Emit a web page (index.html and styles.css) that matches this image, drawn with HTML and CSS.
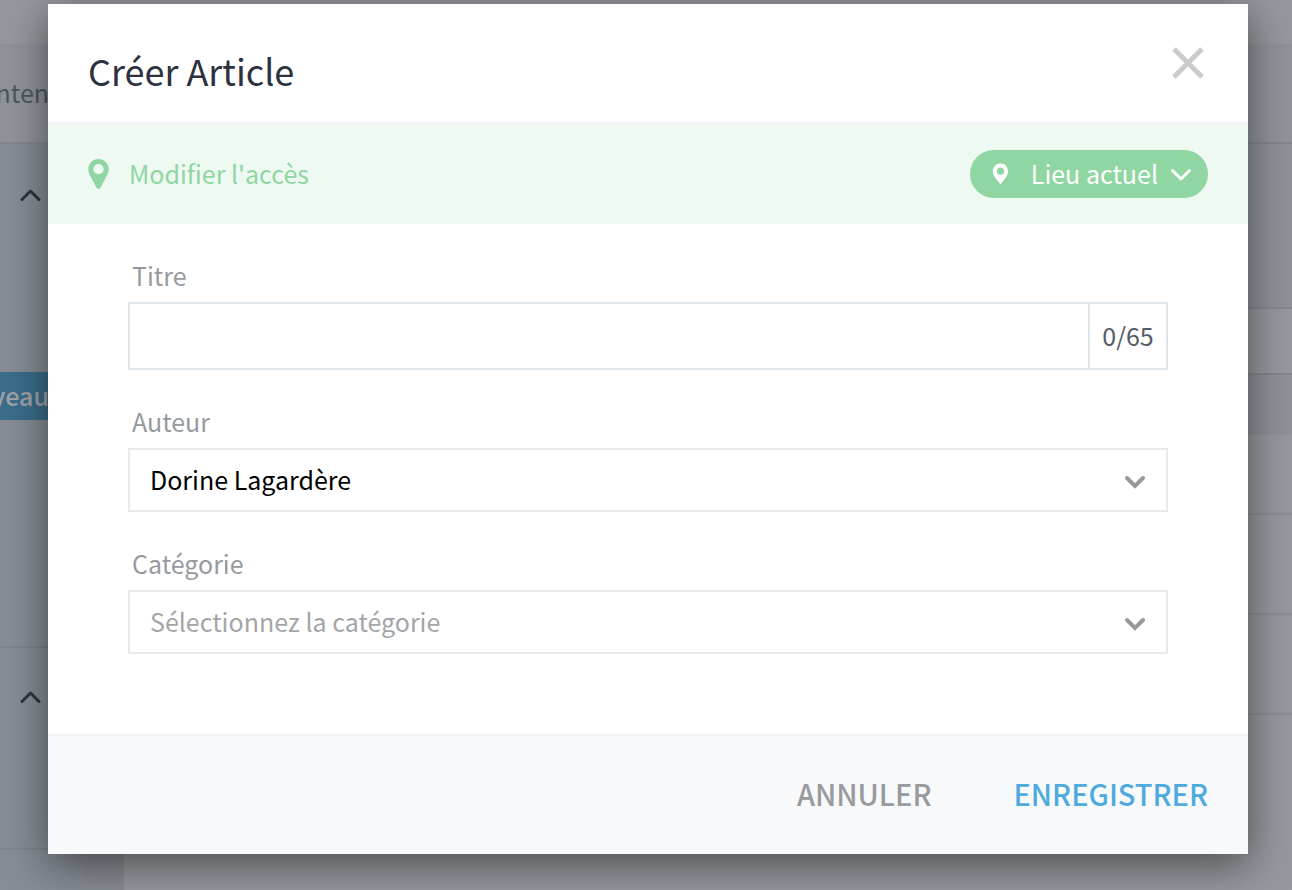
FILE: index.html
```html
<!DOCTYPE html>
<html lang="fr">
<head>
<meta charset="utf-8">
<title>Créer Article</title>
<link rel="stylesheet" href="styles.css">
</head>
<body>
<div class="app">
  <div class="topbar"></div>
  <nav class="tabs"><span class="tab">nten</span></nav>
  <div class="workspace">
    <aside class="sidebar">
      <section class="group group-main">
        <svg class="caret" viewBox="0 0 22 14"><path d="M2 11.500 10.500 3l8.500 8.500"/></svg>
        <span class="current">veau</span>
      </section>
      <section class="group group-extra">
        <svg class="caret" viewBox="0 0 22 14"><path d="M2 11.500 10.500 3l8.500 8.500"/></svg>
      </section>
    </aside>
    <div class="gutter"></div>
    <main class="content">
      <div class="heading"></div>
      <div class="filter"></div>
      <div class="columns"></div>
      <div class="row row-first"></div>
      <div class="row"></div>
      <div class="row"></div>
      <div class="rest"></div>
    </main>
  </div>
</div>

<div class="overlay">
  <form class="dialog" role="dialog" aria-labelledby="dialog-title">
    <header class="dialog-header">
      <h1 class="dialog-title" id="dialog-title">Créer Article</h1>
      <button class="close" type="button" aria-label="Fermer">
        <svg viewBox="0 0 32 32"><path d="M2 2l28 28M30 2 2 30"/></svg>
      </button>
    </header>
    <div class="access">
      <svg class="pin" viewBox="0 0 22 32"><path fill-rule="evenodd" d="M10.500 1C4.800 1 .300 5.500.300 11.200c0 2.500.700 4.200 1.800 6.400l6.300 12c.900 1.800 3.300 1.800 4.200 0l6.300-12c1.100-2.200 1.800-3.900 1.800-6.400C20.700 5.500 16.200 1 10.500 1Zm0 5.100a5.100 5.100 0 1 1 0 10.200 5.100 5.100 0 0 1 0-10.200Z"/></svg>
      <span class="access-label">Modifier l'accès</span>
      <button class="place" type="button">
        <svg class="place-pin" viewBox="0 0 16 22"><path fill-rule="evenodd" d="M8.500.500C4.200.500.800 3.900.800 8.200c0 5.300 5.200 9.300 7.700 13.300 2.500-4 7.500-8 7.500-13.300C16 3.900 12.800.500 8.500.500Zm0 4.100a3.600 3.600 0 1 1 0 7.200 3.600 3.600 0 0 1 0-7.200Z"/></svg>
        <span class="place-label">Lieu actuel</span>
        <svg class="place-caret" viewBox="0 0 20 14"><path d="M1.500 3.500 10 12l8.500-8.500"/></svg>
      </button>
    </div>
    <div class="fields">
      <div class="field">
        <label for="title">Titre</label>
        <div class="box box-title">
          <input id="title" type="text" maxlength="65">
          <span class="counter">0/65</span>
        </div>
      </div>
      <div class="field">
        <label for="author">Auteur</label>
        <div class="box box-select">
          <select id="author"><option>Dorine Lagardère</option></select>
          <svg class="arrow" viewBox="0 0 20 14"><path d="M2 3 10 11l8-8"/></svg>
        </div>
      </div>
      <div class="field">
        <label for="category">Catégorie</label>
        <div class="box box-select">
          <select id="category" class="empty"><option>Sélectionnez la catégorie</option></select>
          <svg class="arrow" viewBox="0 0 20 14"><path d="M2 3 10 11l8-8"/></svg>
        </div>
      </div>
    </div>
    <footer class="dialog-footer">
      <button class="action" type="button">ANNULER</button>
      <button class="action primary" type="submit">ENREGISTRER</button>
    </footer>
  </form>
</div>
</body>
</html>
```
FILE: styles.css
```css
* { box-sizing: border-box; }

body {
  margin: 0;
  font-family: "Noto Sans CJK SC", "Noto Sans", sans-serif;
  font-size: 25px;
  line-height: 36px;
  color: #2c333e;
}

button, input, select { font: inherit; border: 0; padding: 0; margin: 0; background: none; outline: 0; }
button { cursor: pointer; }
svg { display: block; flex: none; }

/* page behind the dialog */
.app { display: flex; flex-direction: column; height: 100vh; overflow: hidden; background: #95989d; }
.topbar { flex: none; height: 44px; }
.tabs { flex: none; display: flex; align-items: center; height: 100px; padding-bottom: 2px; background: #909499; border-bottom: 2px solid #858990; }
.tab, .current { display: flex; justify-content: flex-end; width: 49px; overflow: hidden; }
.tab { color: #4e565f; }
.workspace { flex: 1; display: flex; min-height: 0; }
.sidebar { width: 84px; background: #878c95; }
.group { border-bottom: 2px solid #7f848c; padding: 44px 0 0 20px; }
.group-main { height: 504px; }
.group-extra { height: 202px; padding-top: 42px; }
.caret { width: 22px; height: 14px; fill: none; stroke: #2f343f; stroke-width: 3; stroke-linecap: round; stroke-linejoin: round; }
.current { align-items: center; height: 48px; margin: 170px 0 0 -20px; width: 68px; padding: 0 19px 2px 0; background: #3b6d8b; color: #a0a2a7; font-weight: 500; }
.gutter { width: 40px; background: #878c92; }
.content { flex: 1; display: flex; flex-direction: column; }
.heading { height: 165px; background: #8e9297; border-bottom: 2px solid #858990; }
.filter { height: 66px; border-bottom: 2px solid #84888e; }
.columns { height: 60px; background: #8e9297; }
.row { height: 100px; border-bottom: 2px solid #8c8f94; }
.row-first { height: 80px; }
.rest { flex: 1; }

/* dialog */
.overlay { position: absolute; inset: 0; padding: 4px 44px 36px 48px; overflow: hidden; }
.dialog { background: #fff; box-shadow: 0 10px 40px rgba(0, 0, 0, .5); }
.dialog-header { display: flex; justify-content: space-between; align-items: flex-start; height: 120px; padding: 40px 44px 0 40px; border-bottom: 2px solid #f1f2f3; }
.dialog-title { margin: 0; font-size: 36px; line-height: 52px; font-weight: 400; }
.close { width: 32px; height: 32px; margin-top: 3px; }
.close svg { width: 32px; height: 32px; stroke: #cbcbcb; stroke-width: 5; }

.access { display: flex; align-items: center; height: 100px; padding: 0 40px; background: #eef9f1; color: #8fd6a3; }
.pin { width: 22px; height: 32px; fill: #8fd6a3; }
.access-label { margin-left: 19px; padding-bottom: 2px; }
.place { display: flex; align-items: center; height: 48px; margin-left: auto; padding: 0 17px 0 22px; border-radius: 24px; background: #8fd6a3; color: #fff; }
.place-pin { width: 16px; height: 22px; fill: #fff; }
.place-label { margin: 0 13px 0 23px; padding-bottom: 2px; }
.place-caret { width: 20px; height: 14px; fill: none; stroke: #fff; stroke-width: 3; stroke-linecap: round; stroke-linejoin: round; }

.fields { display: flex; flex-direction: column; gap: 33px; padding: 33px 80px 80px; }
.field label { display: block; height: 45px; padding-left: 4px; color: #969a9f; }
.box { display: flex; align-items: center; border: 2px solid #e8e9ea; }
.box-title { height: 68px; border-color: #dfe5e8; align-items: stretch; }
.box-title input { flex: 1; min-width: 0; padding: 0 20px; }
.counter { display: flex; align-items: center; justify-content: center; width: 78px; padding-bottom: 2px; border-left: 2px solid #dfe5e8; color: #555c66; }
.box-select { height: 64px; display: grid; }
.box-select > * { grid-area: 1 / 1; }
.box-select select { appearance: none; width: 100%; height: 60px; padding: 0 60px 2px 20px; color: #000; }
.box-select .empty { color: #a3a5a8; }
.arrow { justify-self: end; align-self: center; width: 20px; height: 14px; margin: 3px 21px 0 0; pointer-events: none; fill: none; stroke: #95999e; stroke-width: 4; stroke-linecap: round; }

.dialog-footer { display: flex; justify-content: flex-end; align-items: center; gap: 82px; height: 120px; padding: 0 40px 4px; border-top: 2px solid #f1f2f3; background: #f8f9fb; }
.action { font-size: 29px; font-weight: 500; line-height: 44px; color: #989a9e; }
.primary { color: #4faadd; }
```
